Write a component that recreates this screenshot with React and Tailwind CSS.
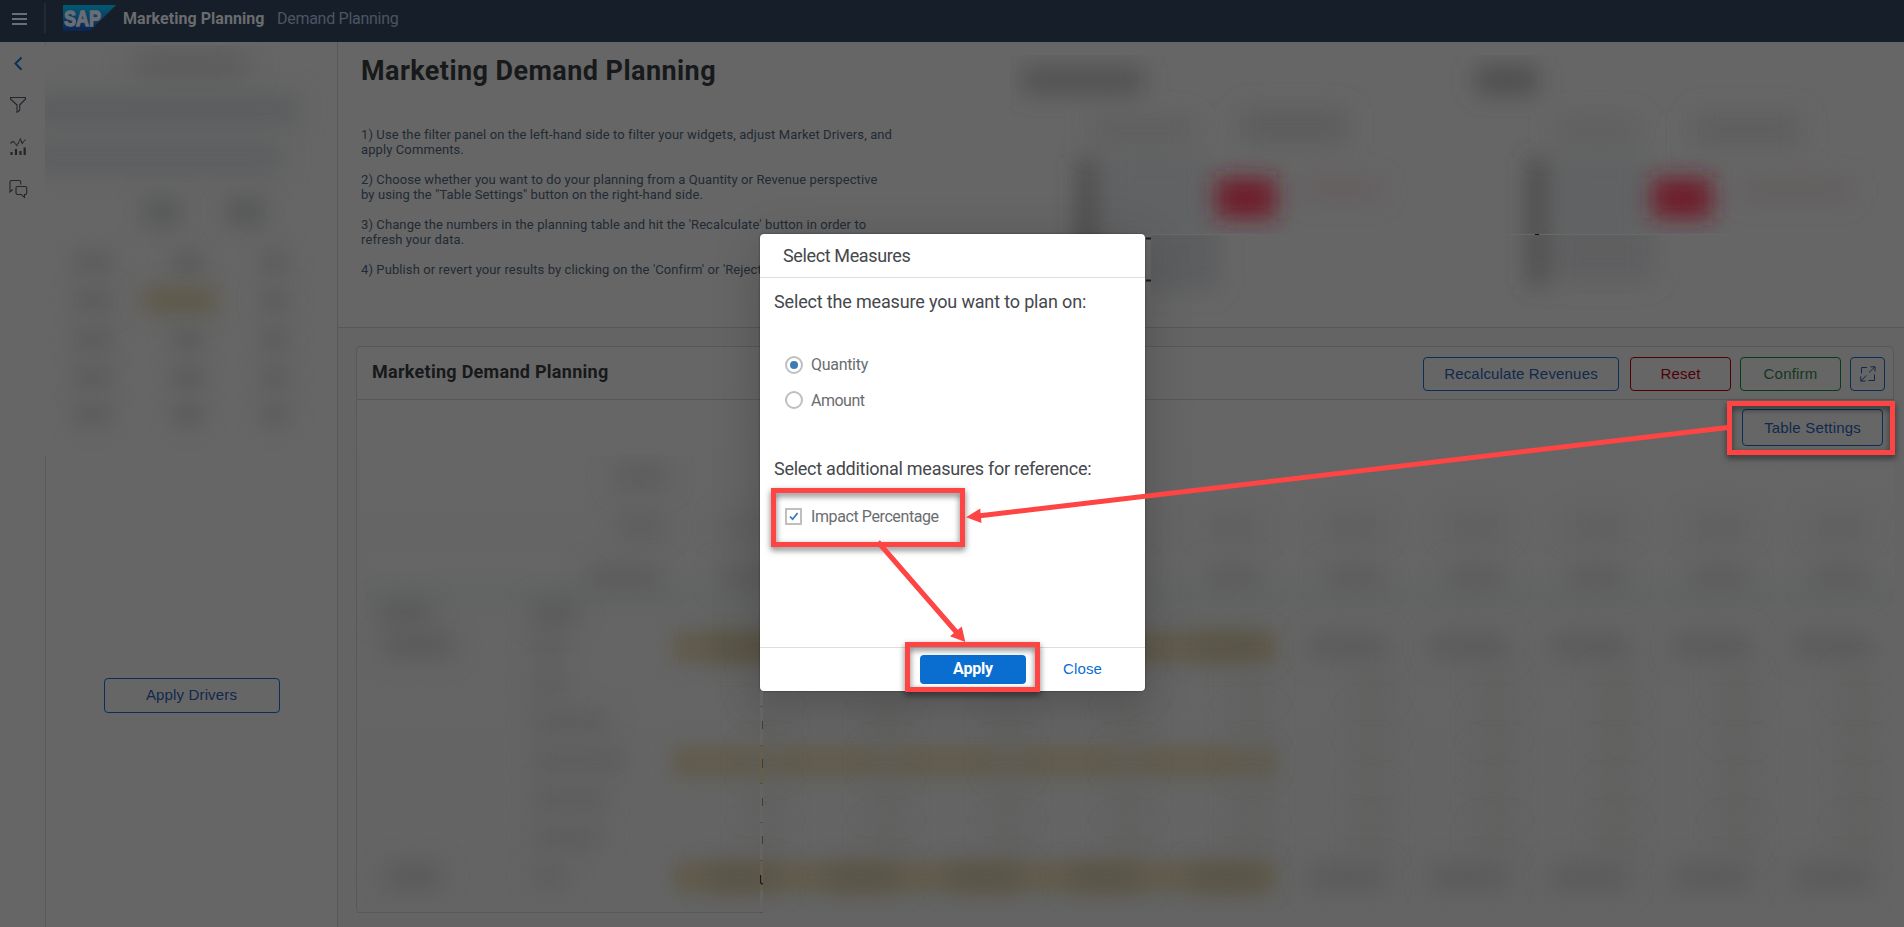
import React from "react";

const HEAD_TOP = "absolute left-[1010px] top-[55px]";

function Logo() {
  return (
    <svg width="54" height="27" viewBox="0 0 54 27" className="ml-[17px] block">
      <defs>
        <linearGradient id="sapFill" x1="0" y1="0" x2="0" y2="1">
          <stop offset="0" stopColor="#005a73" />
          <stop offset="0.5" stopColor="#0a3f68" />
          <stop offset="1" stopColor="#0c2450" />
        </linearGradient>
      </defs>
      <path d="M0 0H53L27 26H0Z" fill="url(#sapFill)" />
      <text x="1" y="20.5" fontFamily="Liberation Sans, sans-serif" fontWeight="700" fontSize="21.5" textLength="37" lengthAdjust="spacingAndGlyphs" fill="#6a6d72" stroke="#6a6d72" strokeWidth="1.3">SAP</text>
    </svg>
  );
}

function Header() {
  return (
    <header className="flex h-[42px] shrink-0 items-start bg-[#161f29] pt-[5px]">
      <svg width="15" height="12" viewBox="0 0 15 12" className="ml-3 mt-2 block" stroke="#66707a" strokeWidth="2">
        <path d="M0 1H15M0 6H15M0 11H15" />
      </svg>
      <div className="-mt-0.5 ml-[17px] h-[30px] w-[2px] bg-[#212b36]" />
      <Logo />
      <div className="ml-[6px] mt-[4px] flex whitespace-nowrap text-[16px] leading-[20px]">
        <span className="w-[154px] font-bold tracking-[0.05px] text-[#6a6c6e]">Marketing Planning</span>
        <span className="tracking-[-0.28px] text-[#4b5563]">Demand Planning</span>
      </div>
    </header>
  );
}

function Rail() {
  return (
    <nav className="flex w-[45px] shrink-0 flex-col items-start pl-[9px] pt-[14px]">
      <svg width="18" height="16" viewBox="0 0 18 16" fill="none" stroke="#0c2f5c" strokeWidth="2">
        <path d="M12.5 1.5L6.5 7.5L12.5 13.8" />
      </svg>
      <svg width="18" height="18" viewBox="0 0 18 18" className="mt-[24px]" fill="none" stroke="#22262b" strokeWidth="1.1">
        <path d="M1.5 1.5H16.5V3L10.7 9V14.2L8 16.4V9L1.5 3Z" strokeLinejoin="round" />
      </svg>
      <svg width="18" height="18" viewBox="0 0 18 18" className="mt-[24px]" fill="none" stroke="#22262b">
        <path d="M1.5 5.5L4 3L8 7.5L11.5 1L13 5.5L16.5 1.5" strokeWidth="1.1" strokeDasharray="3 0.6" />
        <path d="M2.5 14V17M7 11V17M11.5 13V17M15.7 9.5V17" strokeWidth="2.2" />
      </svg>
      <svg width="20" height="20" viewBox="0 0 20 20" className="mt-[23px]" fill="none" stroke="#22262b" strokeWidth="1.1">
        <path d="M3.7 10.5L1 13V3Q1 1.5 2.5 1.5H10.2Q11.7 1.5 11.7 3V5.5" />
        <path d="M8.5 7.5H16.3Q17.7 7.5 17.7 9V14Q17.7 15.5 16.3 15.5H15.5V18.3L12.3 15.5H8.5Q7 15.5 7 14V9Q7 7.5 8.5 7.5Z" />
      </svg>
    </nav>
  );
}

function Drivers() {
  const rows = [0, 1, 2, 3, 4];
  return (
    <aside className="flex w-[292px] shrink-0 flex-col">
      <div className="h-[3px] border-l border-[#5a5a5a]" />
      <div className="h-[411px] overflow-hidden">
        <div className="mx-auto mt-[7px] h-[24px] w-[112px] bg-[#5a5a5a] blur-[14px]" />
        <div className="-ml-5 mt-[18px] h-[30px] w-[274px] bg-[#5b5d5e] blur-[12px]" />
        <div className="-ml-5 mt-[18px] h-[30px] w-[258px] bg-[#5c5e5f] blur-[12px]" />
        <div className="ml-[98px] mt-[26px] flex gap-[46px]">
          <div className="h-[28px] w-[38px] bg-[#575858] blur-[11px]" />
          <div className="h-[28px] w-[38px] bg-[#565757] blur-[11px]" />
        </div>
        <div className="mt-[17px] grid auto-rows-[38.3px] grid-cols-[95px_95px_80px] items-center justify-items-center">
          {rows.map((r) => (
            <React.Fragment key={r}>
              <div className="h-[22px] w-[40px] bg-[#5c5c5c] blur-[10px]" />
              {r === 1 ? (
                <div className="mr-[16px] h-[24px] w-[72px] bg-[#5d5745] blur-[11px]" />
              ) : (
                <div className="h-[22px] w-[32px] bg-[#5b5b5b] blur-[10px]" />
              )}
              <div className="h-[22px] w-[30px] bg-[#5b5c5b] blur-[10px]" />
            </React.Fragment>
          ))}
        </div>
      </div>
      <div className="flex-1 border-l border-[#5a5a5a] pl-[58px] pt-[222px]">
        <div className="flex h-[35px] w-[176px] items-center justify-center rounded-[4px] border border-[#092e58] font-['Liberation_Sans',sans-serif] text-[15px] text-[#10294c]">
          <span className="pr-px tracking-[0.15px]">Apply Drivers</span>
        </div>
      </div>
    </aside>
  );
}

function Charts() {
  return (
    <svg width="894" height="270" viewBox="1010 55 894 270" className={HEAD_TOP}>
      <defs>
        <filter id="soft" x="-100%" y="-100%" width="300%" height="300%">
          <feGaussianBlur stdDeviation="12" />
        </filter>
        <filter id="softer" x="-100%" y="-100%" width="300%" height="300%">
          <feGaussianBlur stdDeviation="11" />
        </filter>
        <clipPath id="upper"><rect x="1009" y="55" width="895" height="179" /></clipPath>
        <clipPath id="lower"><rect x="1151" y="235" width="753" height="90" /></clipPath>
      </defs>
      <g clipPath="url(#upper)">
        <g filter="url(#soft)">
          <rect x="1022" y="66" width="122" height="28" fill="#515151" />
          <rect x="1090" y="116" width="105" height="26" fill="#5f5f5f" />
          <rect x="1240" y="108" width="108" height="36" fill="#5d5d5d" />
          <rect x="1080" y="158" width="15" height="100" fill="#424242" />
          <rect x="1104" y="154" width="106" height="90" fill="#606263" />
          <rect x="1300" y="180" width="82" height="20" fill="#655d5e" />
          <rect x="1476" y="66" width="62" height="28" fill="#4d4d4d" />
          <rect x="1555" y="116" width="85" height="26" fill="#5f605f" />
          <rect x="1692" y="112" width="110" height="36" fill="#5e5e5e" />
          <rect x="1530" y="158" width="15" height="100" fill="#424242" />
          <rect x="1556" y="154" width="90" height="90" fill="#606263" />
          <rect x="1740" y="180" width="112" height="20" fill="#645d5e" />
        </g>
        <g filter="url(#softer)">
          <rect x="1216" y="178" width="60" height="40" fill="#6e1a2c" />
          <rect x="1652" y="178" width="60" height="40" fill="#6e1a2c" />
        </g>
      </g>
      <g clipPath="url(#lower)">
        <g filter="url(#soft)">
          <rect x="1140" y="216" width="78" height="74" fill="#5b5d5f" />
          <rect x="1530" y="216" width="15" height="70" fill="#444" />
          <rect x="1552" y="216" width="102" height="66" fill="#5e5f61" />
        </g>
      </g>
      <path d="M1146 238.5H1151M1146 280.5H1151" stroke="#151c26" strokeWidth="2" />
      <path d="M1151 234.5H1258M1510 234.5H1728" stroke="#696969" />
      <path d="M1535 234.5H1539" stroke="#111" />
    </svg>
  );
}

const steps = [
  ["1) Use the filter panel on the left-hand side to filter your widgets, adjust Market Drivers, and", "apply Comments."],
  ["2) Choose whether you want to do your planning from a Quantity or Revenue perspective", "by using the \"Table Settings\" button on the right-hand side."],
  ["3) Change the numbers in the planning table and hit the 'Recalculate' button in order to", "refresh your data."],
  ["4) Publish or revert your results by clicking on the 'Confirm' or 'Reject"],
];

function Intro() {
  return (
    <section className="h-[286px] border-b border-[#575757] pl-[23px] pt-[13px]">
      <h1 className="whitespace-nowrap text-[27px] font-bold leading-[32px] tracking-[0.43px] text-[#17191b]">Marketing Demand Planning</h1>
      <div className="mt-[40px] flex flex-col gap-[15px] whitespace-nowrap text-[13px] leading-[15px] tracking-[0.1px] text-[#222a33]">
        {steps.map((s, i) => (
          <div key={i}>
            {s.map((line) => <div key={line}>{line}</div>)}
          </div>
        ))}
      </div>
    </section>
  );
}

const cols = [0, 1, 2, 3, 4, 5, 6, 7, 8, 9];
const rowData = [
  { label: "ml-[20px] w-[68px] bg-[#575757]", name: "w-[32px]", yellow: true, strong: true },
  { label: "w-0", name: "w-[32px]", yellow: false, strong: false },
  { label: "w-0", name: "w-[76px]", yellow: false, strong: false },
  { label: "w-0", name: "w-[92px]", yellow: true, strong: false },
  { label: "w-0", name: "w-[72px]", yellow: false, strong: false },
  { label: "w-0", name: "w-[70px]", yellow: false, strong: false },
  { label: "ml-[22px] w-[54px] bg-[#575757]", name: "w-[34px]", yellow: true, strong: true },
];

function PlanTable() {
  return (
    <div className="h-[457px] overflow-hidden pl-[8px]">
      <div className="ml-[250px] mt-[11px] h-[20px] w-[52px] bg-[#5a5a5a] blur-[12px]" />
      <div className="mt-[28px] grid h-[24px] grid-cols-[305px_repeat(10,121.5px)] items-center justify-items-end">
        <div className="mr-[6px] h-[20px] w-[46px] bg-[#5b5b5b] blur-[12px]" />
        {cols.map((c) => <div key={c} className="mr-[18px] h-[20px] w-[54px] bg-[#5e5e5e] blur-[12px]" />)}
      </div>
      <div className="-mr-4 mt-[18px] grid h-[42px] grid-cols-[305px_repeat(10,121.5px)] items-center justify-items-end bg-gradient-to-b from-[#666] to-[#626463]">
        <div className="mr-[10px] h-[20px] w-[72px] bg-[#595959] blur-[12px]" />
        {cols.map((c) => <div key={c} className="mr-[18px] h-[22px] w-[54px] bg-[#5b5b5b] blur-[12px]" />)}
      </div>
      <div className="-mr-4 flex h-[28px] items-center bg-gradient-to-b from-[#626463] to-[#656565]">
        <div className="ml-[16px] h-[20px] w-[48px] bg-[#575757] blur-[12px]" />
        <div className="ml-[106px] h-[20px] w-[40px] bg-[#575757] blur-[12px]" />
      </div>
      {rowData.map((row, i) => (
        <div key={i} className="relative grid h-[38.4px] grid-cols-[168px_137px_repeat(10,121.5px)] items-center">
          {row.yellow && <div className="absolute left-[308px] top-[5px] h-[32px] w-[602px] bg-[#615c4e] blur-[8px]" />}
          <div className={row.label + " h-[20px] blur-[12px]"} />
          <div className={row.name + " h-[20px] bg-[#5c5c5c] blur-[11px]"} />
          {cols.map((c) => (
            <div key={c} className="relative flex h-full items-center justify-end pt-[2px]">
              {row.strong ? (
                <div className={c < 5 ? "mr-[14px] h-[20px] w-[72px] bg-[#565246] blur-[13px]" : "mr-[14px] h-[22px] w-[76px] bg-[#595959] blur-[12px]"} />
              ) : (
                <div className="mr-[10px] h-[28px] w-[34px] bg-[#5e5e5c80] blur-[12px]" />
              )}
            </div>
          ))}
        </div>
      ))}
    </div>
  );
}

const btn = "flex h-[34px] items-center justify-center rounded-[4px] border font-['Liberation_Sans',sans-serif] text-[15px] tracking-[0.18px] whitespace-nowrap";

function Planner() {
  return (
    <section className="flex-1 bg-[#646464] pl-[18px] pt-[18px]">
      <div className="flex h-[567px] w-[1538px] flex-col rounded-l-[5px] rounded-tr-[5px] border-l border-t border-[#585858] bg-gradient-to-b from-[#666] to-[#646464]">
        <div className="rounded-tr-[5px] border-r border-[#585858]">
          <div className="flex h-[53px] items-start border-b border-[#585858] pr-[8px] pt-[10px]">
            <h2 className="ml-[15px] mt-[4px] flex-1 text-[18px] font-bold leading-[22px] tracking-[0.28px] text-[#17191b]">Marketing Demand Planning</h2>
            <div className={btn + " w-[196px] border-[#092e58] text-[#10294c]"}>Recalculate Revenues</div>
            <div className={btn + " ml-[11px] w-[101px] border-[#4f0000] text-[#4f0008]"}>Reset</div>
            <div className={btn + " ml-[9px] w-[101px] border-[#073b1c] text-[#15371f]"}>Confirm</div>
            <div className={btn + " ml-[9px] w-[35px] border-[#092e58]"}>
              <svg width="16" height="16" viewBox="0 0 16 16" fill="none" stroke="#10294c" strokeWidth="1">
                <path d="M7 1.5H1.5V7.5M14.5 8.5V14.5H8.5M9 6.5L15 0.8M10.5 0.8H15V5.5M6.5 9.5L0.8 15M0.8 10.5V15H5.5" />
              </svg>
            </div>
          </div>
          <div className="flex h-[55px] justify-end pr-[10px] pt-[9px]">
            <div className={btn + " !h-[37px] w-[141px] border-[#092e58] pt-px text-[#10294c]"}>Table Settings</div>
          </div>
        </div>
        <PlanTable />
        <div className="h-px w-[406px] bg-[#585858]" />
      </div>
    </section>
  );
}

function Modal() {
  return (
    <div className="absolute left-[760px] top-[234px] flex h-[457px] w-[385px] flex-col rounded-[4px] bg-white text-[#45474c] shadow-[0_10px_50px_rgba(0,0,0,0.2),0_0_2px_rgba(0,0,0,0.5)]">
      <div className="flex h-[44px] items-center border-b border-[#dedede] pl-[23px] text-[18px] tracking-[-0.37px]">Select Measures</div>
      <div className="flex flex-1 flex-col whitespace-nowrap pl-[14px] pt-[12px]">
        <div className="text-[18px] leading-[24px] tracking-[-0.16px]">Select the measure you want to plan on:</div>
        <div className="mt-[41px] flex h-[20px] items-center pl-[11px] text-[16px] tracking-[-0.3px] text-[#6a6d70]">
          <span className="flex size-[18px] items-center justify-center rounded-full border-2 border-[#bfbfbf]">
            <span className="size-[8px] rounded-full bg-[#3c7cb4]" />
          </span>
          <span className="ml-[8px]">Quantity</span>
        </div>
        <div className="mt-[15px] flex h-[20px] items-center pl-[11px] text-[16px] tracking-[-0.5px] text-[#6a6d70]">
          <span className="size-[18px] rounded-full border-2 border-[#bfbfbf]" />
          <span className="ml-[8px] pt-[2px]">Amount</span>
        </div>
        <div className="mt-[47px] text-[18px] leading-[24px] tracking-[-0.26px]">Select additional measures for reference:</div>
        <div className="mt-[25px] flex h-[20px] items-center pl-[11px] text-[16px] tracking-[-0.4px] text-[#6a6d70]">
          <span className="flex size-[17px] items-center justify-center border-2 border-[#bfbfbf]">
            <svg width="10" height="9" viewBox="0 0 10 9" fill="none" stroke="#3c7cb4" strokeWidth="1.8"><path d="M1 4.5L3.6 7.2L8.6 1" /></svg>
          </span>
          <span className="ml-[9px] pt-[2px]">Impact Percentage</span>
        </div>
      </div>
      <div className="flex h-[44px] items-start border-t border-[#dedede] pl-[160px] pt-[7px] text-[16px] leading-[29px]">
        <div className="h-[29px] w-[106px] rounded-[4px] bg-[#0a6ed1] text-center font-bold leading-[28px] tracking-[-0.2px] text-white">Apply</div>
        <div className="ml-[37px] font-['Liberation_Sans',sans-serif] text-[15px] leading-[28px] tracking-[0.15px] text-[#0a6ed1]">Close</div>
      </div>
    </div>
  );
}

function Seam() {
  return (
    <svg width="4" height="222" viewBox="0 0 4 222" className="absolute left-[760px] top-[691px]" fill="none">
      <path d="M1.5 0V221" stroke="#646464" strokeWidth="3" />
      <path d="M1.5 55V92M1.5 170V200" stroke="#655e4c" strokeWidth="3" />
      <path d="M0 15.5H3M0 54.5H3M0 92.5H3M0 131.5H3M0 169.5H3M0 221.5H3" stroke="#505050" />
      <path d="M2.5 30V38M2.5 68V77M2.5 107V115M2.5 145V153" stroke="#4a3a2c" />
      <path d="M0.5 184V191Q0.8 193 3 193" stroke="#181818" strokeWidth="1.3" />
    </svg>
  );
}

function Annotations() {
  const box = "absolute border-[5px] border-[#ff4444] drop-shadow-[0_3px_3px_rgba(0,0,0,0.55)]";
  return (
    <>
      <div className={box + " left-[771px] top-[488px] h-[59px] w-[194px]"} />
      <div className={box + " left-[905px] top-[642px] h-[50px] w-[135px]"} />
      <div className={box + " left-[1727px] top-[401px] h-[54px] w-[168px]"} />
      <svg width="1904" height="927" className="absolute left-0 top-0" stroke="#ff4444" strokeWidth="5" fill="#ff4444">
        <path d="M1728 427.5L978 516M878 542L958 634" fill="none" />
        <path d="M966 517.3L980.2 508.5L981.5 523Z M965.3 642L950 636.3L961.8 626.5Z" stroke="none" />
      </svg>
    </>
  );
}

export default function App() {
  return (
    <div className="relative flex h-[927px] w-[1904px] flex-col overflow-hidden bg-[#666] font-[Roboto,sans-serif]">
      <Header />
      <div className="flex flex-1">
        <Rail />
        <Drivers />
        <main className="flex flex-1 flex-col border-l border-[#575757]">
          <Intro />
          <Planner />
        </main>
      </div>
      <Charts />
      <Modal />
      <Seam />
      <Annotations />
    </div>
  );
}
